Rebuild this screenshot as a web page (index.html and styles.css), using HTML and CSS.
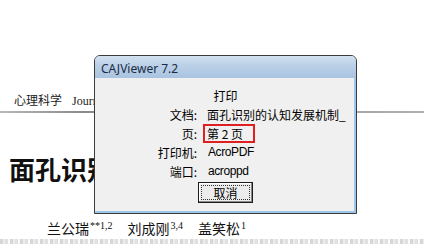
FILE: index.html
```html
<!DOCTYPE html>
<html lang="zh">
<head>
<meta charset="utf-8">
<title>CAJViewer 打印</title>
<link rel="stylesheet" href="styles.css">
</head>
<body>
<div class="page">
  <div class="running-head"><span class="journal-cn">心理科学</span><span class="journal-en">Journal of Psychological Science</span></div>
  <div class="rule"></div>
  <h1 class="paper-title">面孔识别的认知发展机制</h1>
  <p class="authors"><span>兰公瑞<sup>**1,2</sup></span><span>刘成刚<sup>3,4</sup></span><span>盖笑松<sup>1</sup></span></p>
  <div class="faint-line"></div>
</div>

<div class="dialog">
  <div class="titlebar">CAJViewer 7.2</div>
  <div class="client">
    <div class="heading">打印</div>
    <div class="fields">
      <div class="label">文档:</div><div class="value">面孔识别的认知发展机制_</div>
      <div class="label">页:</div><div class="value"><span class="page-box">第 2 页</span></div>
      <div class="label">打印机:</div><div class="value latin">AcroPDF</div>
      <div class="label">端口:</div><div class="value latin">acroppd</div>
    </div>
    <div class="actions"><button class="btn"><span class="focus">取消</span></button></div>
  </div>
</div>
</body>
</html>
```
FILE: styles.css
```css
html, body {
  margin: 0;
  padding: 0;
  background: #ffffff;
  width: 424px;
  height: 244px;
  overflow: hidden;
}

.page {
  display: flex;
  flex-direction: column;
  padding-top: 94px;
}

.running-head {
  display: flex;
  gap: 10px;
  padding-left: 14px;
  font-family: "Liberation Serif", "Noto Sans CJK SC", serif;
  font-size: 12px;
  line-height: 14px;
  color: #222;
  white-space: nowrap;
}

.rule {
  margin-top: 3px;
  height: 2px;
  background: linear-gradient(90deg, #b8b8b8 0%, #8a8a8a 20%, #9a9a9a 60%, #b0b0b0 100%);
}

.paper-title {
  margin: 41px 0 0 9px;
  font-family: "Noto Sans CJK SC", sans-serif;
  font-weight: 700;
  font-size: 26px;
  line-height: 30px;
  color: #111;
  white-space: nowrap;
}

.authors {
  margin: 36px 0 0 47px;
  display: flex;
  gap: 15px;
  font-family: "Noto Sans CJK SC", serif;
  font-size: 14px;
  line-height: 16px;
  color: #111;
  white-space: nowrap;
}

.authors sup {
  font-family: "Liberation Serif", serif;
  font-size: 10px;
  line-height: 0;
  vertical-align: 5px;
  margin-left: 1px;
}

.faint-line {
  margin-top: 3px;
  height: 5px;
  background: repeating-linear-gradient(90deg, #d6d6d6 0 3px, #ececec 3px 5px, #e0e0e0 5px 8px, #fafafa 8px 10px);
}

/* Dialog window lying over the document */
.dialog {
  position: absolute;
  left: 94px;
  top: 55px;
  width: 261px;
  height: 157px;
  border: 1px solid #3b3b3b;
  border-radius: 6px 6px 0 0;
  background: #f0f0f0;
  box-shadow: inset -2px -2px 0 #9cc7ea;
  display: flex;
  flex-direction: column;
}

.titlebar {
  height: 22px;
  padding-left: 6px;
  border-radius: 5px 5px 0 0;
  background: linear-gradient(180deg, #d3e1f0 0%, #bcd1e8 40%, #a9c3e0 100%);
  font-family: "Noto Sans", "Liberation Sans", sans-serif;
  font-size: 12px;
  line-height: 25px;
  color: #1a2c44;
}

.client {
  display: flex;
  flex-direction: column;
  padding-top: 8px;
  font-family: "Noto Sans CJK SC", sans-serif;
  font-size: 12px;
  color: #000;
}

.heading {
  height: 19px;
  line-height: 19px;
  text-align: center;
}

.fields {
  display: grid;
  grid-template-columns: 108px 1fr;
  grid-auto-rows: 19px;
}

.label {
  text-align: right;
  line-height: 19px;
  padding-right: 6px;
  white-space: nowrap;
}

.value {
  line-height: 19px;
  padding-left: 4px;
  white-space: nowrap;
}

.value.latin {
  font-family: "Liberation Sans", sans-serif;
  font-size: 12px;
  letter-spacing: -0.4px;
  padding-left: 5px;
}

.page-box {
  display: inline-block;
  margin-left: -4px;
  padding: 0 10px 0 2px;
  border: 2px solid #e02020;
  line-height: 15px;
  height: 15px;
  vertical-align: top;
}

.actions {
  display: flex;
  justify-content: center;
  padding-top: 1px;
}

.btn {
  width: 55px;
  height: 21px;
  padding: 2px;
  margin: 0;
  background: #ececec;
  border: 1px solid #1c1c1c;
  box-shadow: inset -1px -1px 0 #8a8a8a, inset 1px 1px 0 #ffffff;
  font-family: "Noto Sans CJK SC", sans-serif;
  font-size: 12px;
  color: #000;
  display: flex;
}

.focus {
  flex: 1;
  border: 1px dotted #333;
  line-height: 13px;
  text-align: center;
}
```
